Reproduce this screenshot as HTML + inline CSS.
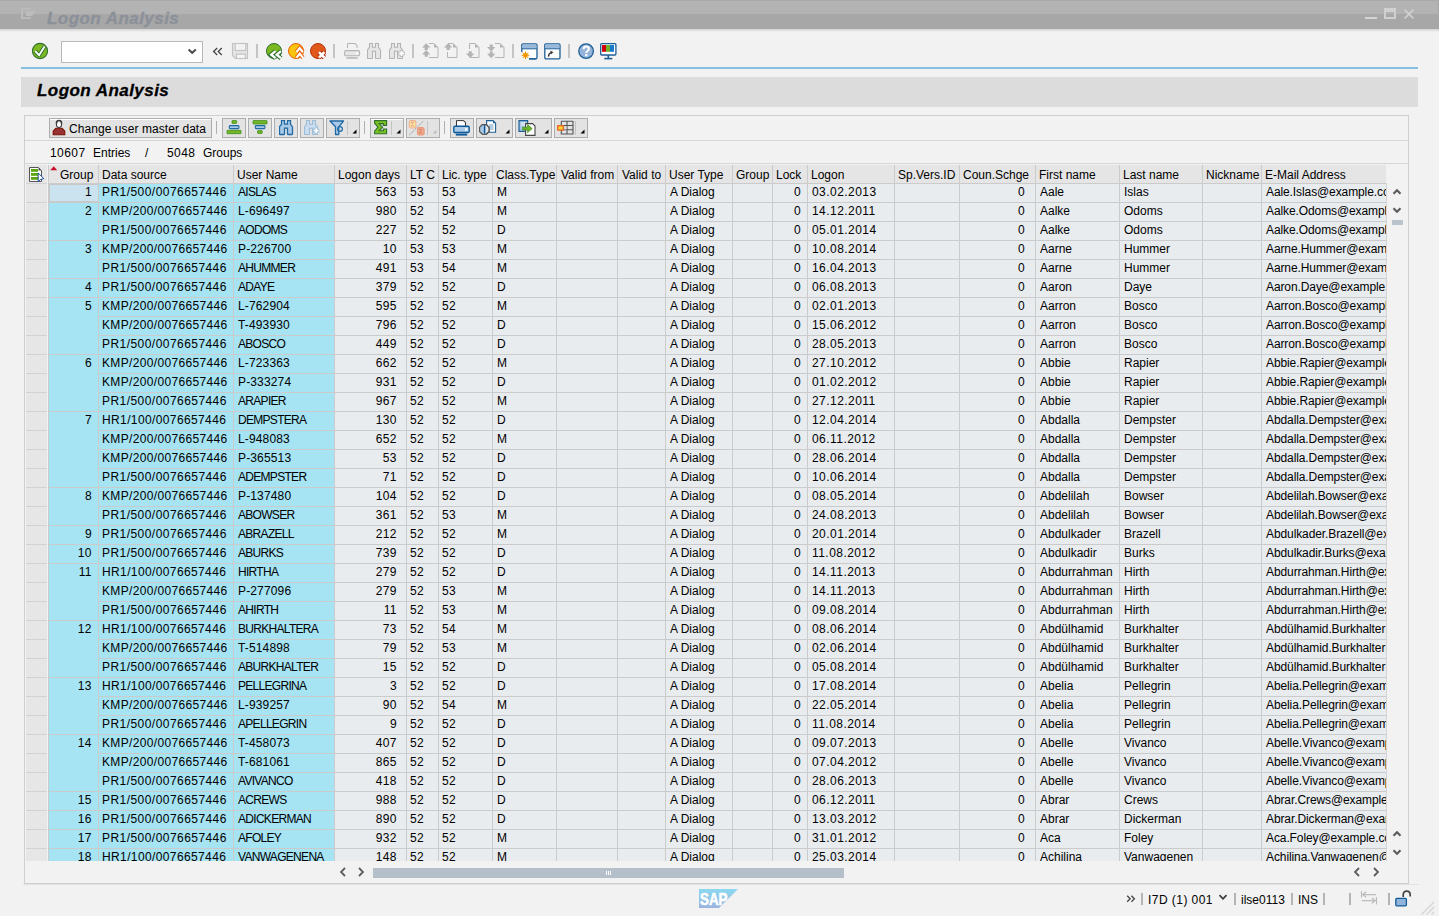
<!DOCTYPE html>
<html><head><meta charset="utf-8"><title>Logon Analysis</title>
<style>
*{margin:0;padding:0;box-sizing:border-box}
html,body{width:1439px;height:916px;overflow:hidden;background:#f2f2f2;font-family:"Liberation Sans",sans-serif;font-size:12px;color:#000}
.a{position:absolute}
.t{position:absolute;white-space:nowrap;line-height:14px;height:14px}
.n{letter-spacing:0.45px}
.btn{position:absolute;background:#e3e3e3;border:1px solid #adadad}
.sep{position:absolute;width:1px;background:#b9b9b9}
</style></head><body>

<div class="a" style="left:0;top:0;width:1439px;height:14px;background:#b3b3b3"></div>
<div class="a" style="left:0;top:14px;width:1439px;height:15px;background:#a7a7a7"></div><div class="a" style="left:0;top:0;width:1439px;height:1px;background:#a9a9a9"></div><div class="a" style="left:1438px;top:0;width:1px;height:14px;background:#a9a9a9"></div>
<div class="a" style="left:0;top:29px;width:1439px;height:3px;background:linear-gradient(#d2d2d2,#f2f2f2)"></div>
<svg class="a" style="left:21px;top:8px" width="16" height="12" viewBox="0 0 16 12"><path d="M0 0H10V1.8H2V9.2H10V11H0Z" fill="#bcbcbc"/><path d="M4.8 3H15L10.8 8H4.8Z" fill="#bcbcbc"/></svg>
<div class="t" style="left:47px;top:11px;font-size:17px;line-height:16px;height:16px;font-weight:bold;font-style:italic;color:#8b9099;letter-spacing:0.45px;-webkit-text-stroke:0.3px #8b9099">Logon Analysis</div>
<div class="a" style="left:1365px;top:17px;width:12px;height:2px;background:#d4d4d4"></div>
<div class="a" style="left:1384px;top:8px;width:12px;height:11px;border:2px solid #d0d0d0;border-top-width:4px"></div>
<svg class="a" style="left:1404px;top:9px" width="10" height="10" viewBox="0 0 10 10"><path d="M0.6 0.6L9.4 9.4M9.4 0.6L0.6 9.4" stroke="#d0d0d0" stroke-width="1.7"/></svg>
<svg class="a" style="left:31px;top:42px" width="18" height="18" viewBox="0 0 18 18"><circle cx="9" cy="9" r="7.6" fill="#7cb820" stroke="#2e7030" stroke-width="1.1"/><path d="M4.2 9.1L8.1 13.2L13.6 4.6" fill="none" stroke="#2e7030" stroke-width="3.8" stroke-linejoin="round"/><path d="M4.2 9.1L8.1 13.2L13.6 4.6" fill="none" stroke="#fff" stroke-width="1.9"/></svg>
<div class="a" style="left:61px;top:41px;width:142px;height:22px;background:#fff;border:1px solid #b8b8b8"></div>
<svg class="a" style="left:186px;top:47px" width="12" height="9" viewBox="0 0 12 9"><path d="M2.6 2.4L6.2 5.8L9.8 2.4" fill="none" stroke="#4a4a4a" stroke-width="2"/></svg>
<svg class="a" style="left:212px;top:47px" width="12" height="10" viewBox="0 0 12 10"><path d="M5.2 1L1.6 4.5L5.2 8M9.8 1L6.2 4.5L9.8 8" fill="none" stroke="#454545" stroke-width="1.3"/></svg>
<svg class="a" style="left:231px;top:42px" width="18" height="18" viewBox="0 0 18 18"><path d="M1.5 1.5H16.5V16.5H4.5L1.5 13.5Z" fill="#e4e4e4" stroke="#c2c2c2" stroke-width="1.1"/><rect x="4.2" y="1.5" width="10.5" height="7" fill="#f2f2f2" stroke="#c2c2c2" stroke-width="1.1"/><rect x="5.5" y="12.2" width="8.8" height="4.3" fill="#f6f6f6" stroke="#c2c2c2" stroke-width="1.1"/></svg>
<div class="a" style="left:256px;top:44px;width:2px;height:14px;background:#c4c4c4"></div>
<svg class="a" style="left:265px;top:42px" width="19" height="19" viewBox="0 0 19 19"><circle cx="9" cy="9" r="7.5" fill="#7cb820" stroke="#2e7030" stroke-width="1"/><path d="M10.5 9.2L6.2 12.7L10.5 16.2M16 9.2L11.7 12.7L16 16.2" fill="none" stroke="#2e7030" stroke-width="4.4"/><path d="M10.5 9.2L6.2 12.7L10.5 16.2M16 9.2L11.7 12.7L16 16.2" fill="none" stroke="#fff" stroke-width="2.3"/></svg>
<svg class="a" style="left:287px;top:42px" width="19" height="19" viewBox="0 0 19 19"><circle cx="9" cy="9" r="7.5" fill="#f9c30f" stroke="#e6600e" stroke-width="1"/><path d="M9.5 10L12.7 6.2L15.9 10M9.5 15.6L12.7 11.8L15.9 15.6" fill="none" stroke="#e6600e" stroke-width="4.2"/><path d="M9.5 10L12.7 6.2L15.9 10M9.5 15.6L12.7 11.8L15.9 15.6" fill="none" stroke="#fff" stroke-width="2.2"/></svg>
<svg class="a" style="left:309px;top:42px" width="19" height="19" viewBox="0 0 19 19"><circle cx="9" cy="9" r="7.5" fill="#e0581a" stroke="#b8300c" stroke-width="1"/><path d="M10 10.2L15.4 15.6M15.4 10.2L10 15.6" fill="none" stroke="#b8300c" stroke-width="4.6"/><path d="M10 10.2L15.4 15.6M15.4 10.2L10 15.6" fill="none" stroke="#fff" stroke-width="2.6"/></svg>
<div class="a" style="left:333px;top:44px;width:2px;height:14px;background:#c4c4c4"></div>
<svg class="a" style="left:344px;top:43px" width="17" height="17" viewBox="0 0 17 17"><path d="M3.5 5V0.5H11.5L13 2V5" fill="none" stroke="#b4b4b4" stroke-width="1"/><path d="M11.5 0.5V2H13Z" fill="#b4b4b4"/><rect x="0.6" y="7.6" width="15" height="5.2" rx="1.3" fill="#e6e6e6" stroke="#b4b4b4" stroke-width="1.1"/><rect x="12" y="9.2" width="2" height="2" fill="#fff"/><rect x="2.3" y="14.2" width="11.6" height="1.6" rx="0.8" fill="#b4b4b4"/></svg>
<svg class="a" style="left:367px;top:43px" width="15" height="17" viewBox="0 0 15 17"><path d="M2.5 0.5H5.5V4.2H8.5V0.5H11.5V4.5Q13.5 6 13.5 7.5V15Q13.5 15.5 13 15.5H9Q8.5 15.5 8.5 15V8.2H5.5V15Q5.5 15.5 5 15.5H1Q0.5 15.5 0.5 15V7.5Q0.5 6 2.5 4.5Z" fill="#e6e6e6" stroke="#b4b4b4" stroke-width="1.1"/></svg>
<svg class="a" style="left:389px;top:43px" width="17" height="17" viewBox="0 0 17 17"><path d="M2.5 0.5H5.5V4.2H8.5V0.5H11.5V4.5Q13.5 6 13.5 7.5V15Q13.5 15.5 13 15.5H9Q8.5 15.5 8.5 15V8.2H5.5V15Q5.5 15.5 5 15.5H1Q0.5 15.5 0.5 15V7.5Q0.5 6 2.5 4.5Z" fill="#e6e6e6" stroke="#b4b4b4" stroke-width="1.1"/><path d="M12.5 7.2V13.8M9.2 10.5H15.8" stroke="#b4b4b4" stroke-width="3.6"/><path d="M12.5 7.9V13.1M9.9 10.5H15.1" stroke="#fff" stroke-width="1.8"/></svg>
<div class="a" style="left:412px;top:44px;width:2px;height:14px;background:#c4c4c4"></div>
<svg class="a" style="left:422px;top:43px" width="18" height="17" viewBox="0 0 18 17"><path d="M6.5 0.5H12L16 4.5V14.5H6.5Z" fill="none" stroke="#b4b4b4" stroke-width="1"/><path d="M12 0.5L16 4.5H12Z" fill="#b4b4b4"/><rect x="5" y="0" width="2" height="15" fill="#f2f2f2"/><path d="M0 4.6L4.2 0.2L8.4 4.6H5.8V7H2.6V4.6Z" fill="#b4b4b4"/><path d="M0 11.399999999999999L4.2 7.0L8.4 11.399999999999999H5.8V13.8H2.6V11.399999999999999Z" fill="#b4b4b4"/></svg>
<svg class="a" style="left:444px;top:43px" width="18" height="17" viewBox="0 0 18 17"><path d="M3.5 0.5H9L13 4.5V14.5H3.5Z" fill="none" stroke="#b4b4b4" stroke-width="1"/><path d="M9 0.5L13 4.5H9Z" fill="#b4b4b4"/><rect x="2" y="0" width="2" height="9" fill="#f2f2f2"/><path d="M0 4.6L4.2 0.2L8.4 4.6H5.8V7H2.6V4.6Z" fill="#b4b4b4"/></svg>
<svg class="a" style="left:466px;top:43px" width="18" height="17" viewBox="0 0 18 17"><path d="M3.5 0.5H9L13 4.5V14.5H3.5Z" fill="none" stroke="#b4b4b4" stroke-width="1"/><path d="M9 0.5L13 4.5H9Z" fill="#b4b4b4"/><rect x="2" y="6" width="2" height="10" fill="#f2f2f2"/><path d="M0 10.6L4.2 15L8.4 10.6H5.8V8.2H2.6V10.6Z" fill="#b4b4b4"/></svg>
<svg class="a" style="left:487px;top:43px" width="18" height="17" viewBox="0 0 18 17"><path d="M7.5 0.5H13L17 4.5V14.5H7.5Z" fill="none" stroke="#b4b4b4" stroke-width="1"/><path d="M13 0.5L17 4.5H13Z" fill="#b4b4b4"/><rect x="6" y="0" width="2" height="16" fill="#f2f2f2"/><path d="M0 4.0L4.2 8.4L8.4 4.0H5.8V1.5999999999999999H2.6V4.0Z" fill="#b4b4b4"/><path d="M0 10.799999999999999L4.2 15.2L8.4 10.799999999999999H5.8V8.399999999999999H2.6V10.799999999999999Z" fill="#b4b4b4"/></svg>
<div class="a" style="left:512px;top:44px;width:2px;height:14px;background:#c4c4c4"></div>
<svg class="a" style="left:521px;top:43px" width="17" height="17" viewBox="0 0 17 17"><rect x="0.8" y="0.8" width="15.2" height="15" rx="1.2" fill="#fff" stroke="#1b5e96" stroke-width="1.3"/><rect x="1.5" y="1.5" width="13.8" height="4" fill="#98b8dc"/><path d="M1 5.8H15.8" stroke="#1b5e96" stroke-width="1"/><rect x="0" y="9" width="8" height="8" fill="#f2f2f2"/><circle cx="4.5" cy="12.3" r="2.4" fill="#f9b600"/><path d="M4.5 8.6V16M0.8 12.3H8.2M1.9 9.7L7.1 14.9M7.1 9.7L1.9 14.9" stroke="#f39200" stroke-width="1"/><path d="M8 15.8H15.2" stroke="#1b5e96" stroke-width="1.3"/></svg>
<svg class="a" style="left:544px;top:43px" width="17" height="17" viewBox="0 0 17 17"><rect x="0.8" y="0.8" width="15.2" height="15" rx="1.2" fill="#fff" stroke="#1b5e96" stroke-width="1.3"/><rect x="1.5" y="1.5" width="13.8" height="4" fill="#98b8dc"/><path d="M1 5.8H15.8" stroke="#1b5e96" stroke-width="1"/><path d="M4.6 13.6Q4.4 10.4 7.2 9.6" fill="none" stroke="#3a3a3a" stroke-width="1.5"/><path d="M6.4 7.6L9.4 9.2L6.8 11.4Z" fill="#3a3a3a"/></svg>
<div class="a" style="left:568px;top:44px;width:2px;height:14px;background:#c4c4c4"></div>
<svg class="a" style="left:578px;top:43px" width="17" height="17" viewBox="0 0 17 17"><circle cx="8.1" cy="8.1" r="7.3" fill="#93b3d8" stroke="#1b5e96" stroke-width="1.3"/><path d="M5.6 6.3Q5.6 3.6 8.2 3.6Q10.8 3.6 10.8 5.9Q10.8 7.2 9.4 8Q8.3 8.6 8.3 10" fill="none" stroke="#fff" stroke-width="2"/><rect x="7.2" y="11.1" width="2.2" height="2.2" fill="#fff"/></svg>
<svg class="a" style="left:600px;top:43px" width="17" height="17" viewBox="0 0 17 17"><rect x="0.7" y="0.7" width="15.2" height="11.3" rx="1" fill="#fff" stroke="#1b5e96" stroke-width="1.3"/><rect x="2" y="2" width="4" height="6.8" fill="#d0000e"/><rect x="6" y="2" width="4" height="6.8" fill="#72b02a"/><rect x="10" y="2" width="4" height="6.8" fill="#1a7acb"/><path d="M8.3 12V15" stroke="#1b5e96" stroke-width="1.6"/><path d="M4.3 15.6H12.3" stroke="#1b5e96" stroke-width="1.6"/></svg>
<div class="a" style="left:21px;top:67px;width:1397px;height:2px;background:#88bee0"></div>
<div class="a" style="left:21px;top:77px;width:1397px;height:30px;background:#dcdcdc"></div>
<div class="t" style="left:37px;top:82px;font-size:17px;line-height:18px;height:18px;font-weight:bold;font-style:italic;color:#000;letter-spacing:0.45px;-webkit-text-stroke:0.3px #000">Logon Analysis</div>
<div class="a" style="left:24px;top:115px;width:1385px;height:769px;border:1px solid #cfcfcf"></div>
<div class="a" style="left:25px;top:140px;width:1383px;height:1px;background:#d6d6d6"></div>
<div class="a" style="left:25px;top:163px;width:1383px;height:1px;background:#d6d6d6"></div>
<div class="a" style="left:23px;top:884px;width:1396px;height:1px;background:#e2e2e2"></div>
<div class="btn" style="left:49px;top:118px;width:163px;height:20px;box-shadow:inset 0 1px #fff"></div>
<svg class="a" style="left:52px;top:119px" width="14" height="17" viewBox="0 0 14 17"><path d="M1.2 15.8V12.2L3.8 9.3H10.2L12.8 12.2V15.8Z" fill="#993333" stroke="#7a1000" stroke-width="1.1" stroke-linejoin="round"/><ellipse cx="7" cy="5" rx="2.6" ry="3.5" fill="#fff" stroke="#3c3c3c" stroke-width="1.1"/><path d="M4.4 4.6Q4.4 1.5 7 1.5Q9.6 1.5 9.6 4.6" fill="none" stroke="#3c3c3c" stroke-width="1.6"/></svg>
<div class="t" style="left:69px;top:122px;letter-spacing:0.07px">Change user master data</div>
<div class="a" style="left:216px;top:121px;width:1px;height:13px;background:#b0b0b0"></div>
<div class="btn" style="left:222px;top:118px;width:24px;height:20px"></div>
<div class="btn" style="left:248px;top:118px;width:24px;height:20px"></div>
<div class="btn" style="left:274px;top:118px;width:24px;height:20px"></div>
<div class="btn" style="left:300px;top:118px;width:24px;height:20px"></div>
<div class="btn" style="left:326px;top:118px;width:34px;height:20px"></div>
<div class="a" style="left:347px;top:121px;width:1px;height:14px;background:#c4c4c4"></div>
<svg class="a" style="left:352px;top:129px" width="5" height="5" viewBox="0 0 5 5"><path d="M4.5 0.5V4.5H0.5Z" fill="#000"/></svg>
<div class="a" style="left:364px;top:121px;width:1px;height:13px;background:#b0b0b0"></div>
<div class="btn" style="left:370px;top:118px;width:34px;height:20px"></div>
<div class="a" style="left:391px;top:121px;width:1px;height:14px;background:#c4c4c4"></div>
<svg class="a" style="left:396px;top:129px" width="5" height="5" viewBox="0 0 5 5"><path d="M4.5 0.5V4.5H0.5Z" fill="#000"/></svg>
<div class="btn" style="left:406px;top:118px;width:34px;height:20px"></div>
<div class="a" style="left:427px;top:121px;width:1px;height:14px;background:#c4c4c4"></div>
<svg class="a" style="left:432px;top:129px" width="5" height="5" viewBox="0 0 5 5"><path d="M4.5 0.5V4.5H0.5Z" fill="#c0c0c0"/></svg>
<div class="a" style="left:444px;top:121px;width:1px;height:13px;background:#b0b0b0"></div>
<div class="btn" style="left:450px;top:118px;width:24px;height:20px"></div>
<div class="btn" style="left:476px;top:118px;width:37px;height:20px"></div>
<svg class="a" style="left:505px;top:129px" width="5" height="5" viewBox="0 0 5 5"><path d="M4.5 0.5V4.5H0.5Z" fill="#000"/></svg>
<div class="btn" style="left:515px;top:118px;width:37px;height:20px"></div>
<svg class="a" style="left:544px;top:129px" width="5" height="5" viewBox="0 0 5 5"><path d="M4.5 0.5V4.5H0.5Z" fill="#000"/></svg>
<div class="btn" style="left:554px;top:118px;width:34px;height:20px"></div>
<div class="a" style="left:575px;top:121px;width:1px;height:14px;background:#c4c4c4"></div>
<svg class="a" style="left:580px;top:129px" width="5" height="5" viewBox="0 0 5 5"><path d="M4.5 0.5V4.5H0.5Z" fill="#000"/></svg>
<svg class="a" style="left:226px;top:120px" width="16" height="15" viewBox="0 0 16 15"><rect x="6" y="0.6" width="4.6" height="2.8" rx="0.5" fill="#76b729" stroke="#3d8b1a" stroke-width="0.8"/><rect x="3.3" y="5.6" width="9.6" height="3" rx="0.8" fill="#a9c9e6" stroke="#1f6aa5" stroke-width="1.1"/><rect x="1" y="10.3" width="14" height="3.4" rx="0.5" fill="#76b729" stroke="#3d8b1a" stroke-width="0.8"/></svg>
<svg class="a" style="left:252px;top:120px" width="16" height="15" viewBox="0 0 16 15"><rect x="1" y="0.6" width="14" height="3.4" rx="0.5" fill="#76b729" stroke="#3d8b1a" stroke-width="0.8"/><rect x="3.3" y="5.6" width="9.6" height="3" rx="0.8" fill="#a9c9e6" stroke="#1f6aa5" stroke-width="1.1"/><rect x="5.6" y="10.6" width="4.6" height="2.8" rx="0.5" fill="#76b729" stroke="#3d8b1a" stroke-width="0.8"/></svg>
<svg class="a" style="left:279px;top:120px" width="15" height="16" viewBox="0 0 15 16"><path d="M2.5 0.5H5.5V4.2H8.5V0.5H11.5V4.5Q13.5 6 13.5 7.5V14Q13.5 14.5 13 14.5H9Q8.5 14.5 8.5 14V8.2H5.5V14Q5.5 14.5 5 14.5H1Q0.5 14.5 0.5 14V7.5Q0.5 6 2.5 4.5Z" fill="#a9c9e6" stroke="#1f6aa5" stroke-width="1.3"/></svg>
<svg class="a" style="left:304px;top:120px" width="17" height="17" viewBox="0 0 17 17"><path d="M2.5 0.5H5.5V4.2H8.5V0.5H11.5V4.5Q13.5 6 13.5 7.5V14Q13.5 14.5 13 14.5H9Q8.5 14.5 8.5 14V8.2H5.5V14Q5.5 14.5 5 14.5H1Q0.5 14.5 0.5 14V7.5Q0.5 6 2.5 4.5Z" fill="#c9ddef" stroke="#9cbcd8" stroke-width="1.1"/><path d="M12.3 7.6V13.6M9.3 10.6H15.3" stroke="#9cbcd8" stroke-width="3.6"/><path d="M12.3 8.3V12.9M10 10.6H14.6" stroke="#fff" stroke-width="1.8"/></svg>
<svg class="a" style="left:329px;top:120px" width="16" height="16" viewBox="0 0 16 16"><path d="M1 1H14.5L9.8 6.8V14.5H6.5V6.8Z" fill="#a9c9e6" stroke="#1f6aa5" stroke-width="1.3" stroke-linejoin="round"/><circle cx="11" cy="9" r="2.4" fill="none" stroke="#1f6aa5" stroke-width="1.2"/></svg>
<div class="a" style="left:371px;top:119px;width:32px;height:1px;background:#fff"></div>
<svg class="a" style="left:374px;top:120px" width="14" height="15" viewBox="0 0 14 15"><path d="M0.6 0.6H12.6V5.4H9.4V3.6H5.2L8.6 7.2L5.2 10.8H9.4V9H12.6V13.8H0.6V11.2L4 7.2L0.6 3.2Z" fill="#7cc01f" stroke="#2e7030" stroke-width="1.1" stroke-linejoin="miter"/></svg>
<svg class="a" style="left:408px;top:120px" width="18" height="17" viewBox="0 0 18 17"><rect x="1.3" y="0.6" width="6.6" height="7.4" rx="1.6" fill="#f9e7a0" stroke="#f0b090" stroke-width="1.1"/><path d="M2.8 2.4H6.4M3 2.6L5 4.3L3 6M2.8 6H6.4" fill="none" stroke="#e8a08a" stroke-width="0.9"/><rect x="9.5" y="7.6" width="6.6" height="7.4" rx="1.6" fill="#f0b090" stroke="#e89878" stroke-width="1.1"/><path d="M11 9.4H14.6M11.2 9.6L13.2 11.3L11.2 13M11 13H14.6" fill="none" stroke="#d87a68" stroke-width="0.9"/><path d="M1.2 15.2L15.8 0.6" stroke="#6a6a6a" stroke-width="0.7" stroke-dasharray="1 0.6"/></svg>
<svg class="a" style="left:453px;top:120px" width="18" height="17" viewBox="0 0 18 17"><path d="M3.5 6V0.6H10.8L12.5 2.3V6" fill="#fff" stroke="#333" stroke-width="1"/><path d="M10.8 0.6V2.3H12.5Z" fill="#333"/><rect x="0.8" y="6.3" width="15.4" height="6.2" rx="1.2" fill="#a9c9e6" stroke="#0f5a9a" stroke-width="1.4"/><rect x="12" y="8.3" width="2.4" height="2.2" fill="#fff"/><rect x="2.8" y="13.6" width="11.4" height="2" fill="#0f5a9a"/></svg>
<svg class="a" style="left:479px;top:120px" width="19" height="16" viewBox="0 0 19 16"><path d="M7.6 0.6H14L16.6 3.2V12.2H7.6Z" fill="#fff" stroke="#1b5e96" stroke-width="1.1"/><path d="M14 0.6V3.2H16.6Z" fill="#1b5e96"/><path d="M10 5H14.5M10 7H14.5M10 9H14.5" stroke="#5a8ec0" stroke-width="0.9"/><path d="M3.4 4.6H7.4L10.2 7.4V11.4L7.4 14.2H3.4L0.6 11.4V7.4Z" fill="#dfe6ee" stroke="#555" stroke-width="1.1"/><path d="M3.4 4.6H5.4V14.2H3.4L0.6 11.4V7.4Z" fill="#a9c9e6"/><path d="M5.6 5.2V13.6" stroke="#0f5a9a" stroke-width="1.5"/><path d="M3.4 4.6H7.4L10.2 7.4V11.4L7.4 14.2H3.4L0.6 11.4V7.4Z" fill="none" stroke="#555" stroke-width="1.1"/></svg>
<svg class="a" style="left:518px;top:120px" width="19" height="17" viewBox="0 0 19 17"><path d="M1 0.6H9.6V11.4H1Z" fill="#a9c9e6" stroke="#1b5e96" stroke-width="1.2"/><path d="M3 3H7.6M3 5H7.6" stroke="#fff" stroke-width="0.9"/><path d="M7.6 3.6H14.6L17 6V15.4H7.6Z" fill="#fff" stroke="#444" stroke-width="1.1"/><path d="M4.6 7.2H9.6V4.6L14.2 8.6L9.6 12.6V10H4.6Z" fill="#6cb52b" stroke="#3d8a22" stroke-width="0.7"/></svg>
<svg class="a" style="left:557px;top:120px" width="18" height="16" viewBox="0 0 18 16"><path d="M4.3 1.2H16M4.3 5.5H16M4.3 9.8H16M4.3 14H16M4.3 1V14.5M10 1V14.5M16 1V14.5" stroke="#555" stroke-width="1.1"/><rect x="5" y="6" width="4.5" height="3.3" fill="#d8d8d8"/><rect x="0.7" y="5.7" width="5.6" height="4.4" fill="#f9d038" stroke="#e8601a" stroke-width="1.2"/></svg>
<div class="t n" style="left:50px;top:146px">10607</div>
<div class="t" style="left:93px;top:146px">Entries</div>
<div class="t" style="left:145px;top:146px">/</div>
<div class="t n" style="left:167px;top:146px">5048</div>
<div class="t" style="left:203px;top:146px">Groups</div>
<div class="a" style="left:26px;top:165px;width:21px;height:696px;background:#e6e6e6"></div>
<div class="a" style="left:49px;top:165px;width:1337px;height:18px;background:#e5e5e5"></div>
<div class="a" style="left:49px;top:184px;width:285px;height:677px;background:#a6e3f3"></div>
<div class="a" style="left:335px;top:184px;width:1051px;height:677px;background:#e9ecef"></div>
<div class="a" style="left:49px;top:183px;width:1337px;height:1px;background:#cbcbcb"></div>
<div class="a" style="left:26px;top:183px;width:21px;height:1px;background:#d2d2d2"></div>
<div class="a" style="left:49px;top:202px;width:1337px;height:1px;background:#cbcbcb"></div>
<div class="a" style="left:26px;top:202px;width:21px;height:1px;background:#d2d2d2"></div>
<div class="a" style="left:99px;top:221px;width:1287px;height:1px;background:#cbcbcb"></div>
<div class="a" style="left:26px;top:221px;width:21px;height:1px;background:#d2d2d2"></div>
<div class="a" style="left:49px;top:240px;width:1337px;height:1px;background:#cbcbcb"></div>
<div class="a" style="left:26px;top:240px;width:21px;height:1px;background:#d2d2d2"></div>
<div class="a" style="left:99px;top:259px;width:1287px;height:1px;background:#cbcbcb"></div>
<div class="a" style="left:26px;top:259px;width:21px;height:1px;background:#d2d2d2"></div>
<div class="a" style="left:49px;top:278px;width:1337px;height:1px;background:#cbcbcb"></div>
<div class="a" style="left:26px;top:278px;width:21px;height:1px;background:#d2d2d2"></div>
<div class="a" style="left:49px;top:297px;width:1337px;height:1px;background:#cbcbcb"></div>
<div class="a" style="left:26px;top:297px;width:21px;height:1px;background:#d2d2d2"></div>
<div class="a" style="left:99px;top:316px;width:1287px;height:1px;background:#cbcbcb"></div>
<div class="a" style="left:26px;top:316px;width:21px;height:1px;background:#d2d2d2"></div>
<div class="a" style="left:99px;top:335px;width:1287px;height:1px;background:#cbcbcb"></div>
<div class="a" style="left:26px;top:335px;width:21px;height:1px;background:#d2d2d2"></div>
<div class="a" style="left:49px;top:354px;width:1337px;height:1px;background:#cbcbcb"></div>
<div class="a" style="left:26px;top:354px;width:21px;height:1px;background:#d2d2d2"></div>
<div class="a" style="left:99px;top:373px;width:1287px;height:1px;background:#cbcbcb"></div>
<div class="a" style="left:26px;top:373px;width:21px;height:1px;background:#d2d2d2"></div>
<div class="a" style="left:99px;top:392px;width:1287px;height:1px;background:#cbcbcb"></div>
<div class="a" style="left:26px;top:392px;width:21px;height:1px;background:#d2d2d2"></div>
<div class="a" style="left:49px;top:411px;width:1337px;height:1px;background:#cbcbcb"></div>
<div class="a" style="left:26px;top:411px;width:21px;height:1px;background:#d2d2d2"></div>
<div class="a" style="left:99px;top:430px;width:1287px;height:1px;background:#cbcbcb"></div>
<div class="a" style="left:26px;top:430px;width:21px;height:1px;background:#d2d2d2"></div>
<div class="a" style="left:99px;top:449px;width:1287px;height:1px;background:#cbcbcb"></div>
<div class="a" style="left:26px;top:449px;width:21px;height:1px;background:#d2d2d2"></div>
<div class="a" style="left:99px;top:468px;width:1287px;height:1px;background:#cbcbcb"></div>
<div class="a" style="left:26px;top:468px;width:21px;height:1px;background:#d2d2d2"></div>
<div class="a" style="left:49px;top:487px;width:1337px;height:1px;background:#cbcbcb"></div>
<div class="a" style="left:26px;top:487px;width:21px;height:1px;background:#d2d2d2"></div>
<div class="a" style="left:99px;top:506px;width:1287px;height:1px;background:#cbcbcb"></div>
<div class="a" style="left:26px;top:506px;width:21px;height:1px;background:#d2d2d2"></div>
<div class="a" style="left:49px;top:525px;width:1337px;height:1px;background:#cbcbcb"></div>
<div class="a" style="left:26px;top:525px;width:21px;height:1px;background:#d2d2d2"></div>
<div class="a" style="left:49px;top:544px;width:1337px;height:1px;background:#cbcbcb"></div>
<div class="a" style="left:26px;top:544px;width:21px;height:1px;background:#d2d2d2"></div>
<div class="a" style="left:49px;top:563px;width:1337px;height:1px;background:#cbcbcb"></div>
<div class="a" style="left:26px;top:563px;width:21px;height:1px;background:#d2d2d2"></div>
<div class="a" style="left:99px;top:582px;width:1287px;height:1px;background:#cbcbcb"></div>
<div class="a" style="left:26px;top:582px;width:21px;height:1px;background:#d2d2d2"></div>
<div class="a" style="left:99px;top:601px;width:1287px;height:1px;background:#cbcbcb"></div>
<div class="a" style="left:26px;top:601px;width:21px;height:1px;background:#d2d2d2"></div>
<div class="a" style="left:49px;top:620px;width:1337px;height:1px;background:#cbcbcb"></div>
<div class="a" style="left:26px;top:620px;width:21px;height:1px;background:#d2d2d2"></div>
<div class="a" style="left:99px;top:639px;width:1287px;height:1px;background:#cbcbcb"></div>
<div class="a" style="left:26px;top:639px;width:21px;height:1px;background:#d2d2d2"></div>
<div class="a" style="left:99px;top:658px;width:1287px;height:1px;background:#cbcbcb"></div>
<div class="a" style="left:26px;top:658px;width:21px;height:1px;background:#d2d2d2"></div>
<div class="a" style="left:49px;top:677px;width:1337px;height:1px;background:#cbcbcb"></div>
<div class="a" style="left:26px;top:677px;width:21px;height:1px;background:#d2d2d2"></div>
<div class="a" style="left:99px;top:696px;width:1287px;height:1px;background:#cbcbcb"></div>
<div class="a" style="left:26px;top:696px;width:21px;height:1px;background:#d2d2d2"></div>
<div class="a" style="left:99px;top:715px;width:1287px;height:1px;background:#cbcbcb"></div>
<div class="a" style="left:26px;top:715px;width:21px;height:1px;background:#d2d2d2"></div>
<div class="a" style="left:49px;top:734px;width:1337px;height:1px;background:#cbcbcb"></div>
<div class="a" style="left:26px;top:734px;width:21px;height:1px;background:#d2d2d2"></div>
<div class="a" style="left:99px;top:753px;width:1287px;height:1px;background:#cbcbcb"></div>
<div class="a" style="left:26px;top:753px;width:21px;height:1px;background:#d2d2d2"></div>
<div class="a" style="left:99px;top:772px;width:1287px;height:1px;background:#cbcbcb"></div>
<div class="a" style="left:26px;top:772px;width:21px;height:1px;background:#d2d2d2"></div>
<div class="a" style="left:49px;top:791px;width:1337px;height:1px;background:#cbcbcb"></div>
<div class="a" style="left:26px;top:791px;width:21px;height:1px;background:#d2d2d2"></div>
<div class="a" style="left:49px;top:810px;width:1337px;height:1px;background:#cbcbcb"></div>
<div class="a" style="left:26px;top:810px;width:21px;height:1px;background:#d2d2d2"></div>
<div class="a" style="left:49px;top:829px;width:1337px;height:1px;background:#cbcbcb"></div>
<div class="a" style="left:26px;top:829px;width:21px;height:1px;background:#d2d2d2"></div>
<div class="a" style="left:49px;top:848px;width:1337px;height:1px;background:#cbcbcb"></div>
<div class="a" style="left:26px;top:848px;width:21px;height:1px;background:#d2d2d2"></div>
<div class="a" style="left:48px;top:165px;width:1px;height:696px;background:#cbcbcb"></div>
<div class="a" style="left:98px;top:165px;width:1px;height:696px;background:#cbcbcb"></div>
<div class="a" style="left:233px;top:165px;width:1px;height:696px;background:#cbcbcb"></div>
<div class="a" style="left:334px;top:165px;width:1px;height:696px;background:#cbcbcb"></div>
<div class="a" style="left:406px;top:165px;width:1px;height:696px;background:#cbcbcb"></div>
<div class="a" style="left:438px;top:165px;width:1px;height:696px;background:#cbcbcb"></div>
<div class="a" style="left:492px;top:165px;width:1px;height:696px;background:#cbcbcb"></div>
<div class="a" style="left:556px;top:165px;width:1px;height:696px;background:#cbcbcb"></div>
<div class="a" style="left:617px;top:165px;width:1px;height:696px;background:#cbcbcb"></div>
<div class="a" style="left:665px;top:165px;width:1px;height:696px;background:#cbcbcb"></div>
<div class="a" style="left:732px;top:165px;width:1px;height:696px;background:#cbcbcb"></div>
<div class="a" style="left:772px;top:165px;width:1px;height:696px;background:#cbcbcb"></div>
<div class="a" style="left:807px;top:165px;width:1px;height:696px;background:#cbcbcb"></div>
<div class="a" style="left:894px;top:165px;width:1px;height:696px;background:#cbcbcb"></div>
<div class="a" style="left:959px;top:165px;width:1px;height:696px;background:#cbcbcb"></div>
<div class="a" style="left:1035px;top:165px;width:1px;height:696px;background:#cbcbcb"></div>
<div class="a" style="left:1119px;top:165px;width:1px;height:696px;background:#cbcbcb"></div>
<div class="a" style="left:1202px;top:165px;width:1px;height:696px;background:#cbcbcb"></div>
<div class="a" style="left:1261px;top:165px;width:1px;height:696px;background:#cbcbcb"></div>
<div class="a" style="left:1386px;top:183px;width:1px;height:678px;background:#d4d4d4"></div>
<div class="a" style="left:49px;top:184px;width:49px;height:18px;background:#cbe3ee;border:1px solid #c8c8c8;border-right:0"></div>
<svg class="a" style="left:29px;top:167px" width="17" height="16" viewBox="0 0 17 16"><path d="M0.5 0.5H9.5L12.5 3.5V14.5H0.5Z" fill="#fff" stroke="#555" stroke-width="1"/><path d="M9.5 0.5L12.5 3.5H9.5Z" fill="#555"/><rect x="2" y="2" width="7" height="2.8" fill="#5aa60d"/><rect x="2" y="6" width="7" height="2.8" fill="#5aa60d"/><rect x="2" y="10" width="7" height="2.8" fill="#5aa60d"/><path d="M9.2 6V14.8L11.2 12.6L14.8 11.6Z" fill="#fff" stroke="#1b4fa0" stroke-width="1"/></svg>
<svg class="a" style="left:50px;top:166px" width="8" height="5" viewBox="0 0 8 5"><path d="M0.2 4.2L3.7 0.2L7.2 4.2Z" fill="#c8102e"/></svg>
<div class="t" style="left:60px;top:168px">Group</div>
<div class="t" style="left:102px;top:168px">Data source</div>
<div class="t" style="left:237px;top:168px">User Name</div>
<div class="t" style="left:338px;top:168px">Logon days</div>
<div class="t" style="left:410px;top:168px">LT C</div>
<div class="t" style="left:442px;top:168px">Lic. type</div>
<div class="t" style="left:496px;top:168px">Class.Type</div>
<div class="t" style="left:561px;top:168px">Valid from</div>
<div class="t" style="left:622px;top:168px">Valid to</div>
<div class="t" style="left:669px;top:168px">User Type</div>
<div class="t" style="left:736px;top:168px">Group</div>
<div class="t" style="left:776px;top:168px">Lock</div>
<div class="t" style="left:811px;top:168px">Logon</div>
<div class="t" style="left:898px;top:168px">Sp.Vers.ID</div>
<div class="t" style="left:963px;top:168px">Coun.Schge</div>
<div class="t" style="left:1039px;top:168px">First name</div>
<div class="t" style="left:1123px;top:168px">Last name</div>
<div class="t" style="left:1206px;top:168px">Nickname</div>
<div class="t" style="left:1265px;top:168px">E-Mail Address</div>
<div class="t n" style="right:1347px;top:185px">1</div>
<div class="t" style="left:102px;top:185px;letter-spacing:0.45px">PR1/500/0076657446</div>
<div class="t" style="left:238px;top:185px;letter-spacing:-0.7px">AISLAS</div>
<div class="t n" style="right:1042px;top:185px">563</div>
<div class="t n" style="left:410px;top:185px">53</div>
<div class="t n" style="left:442px;top:185px">53</div>
<div class="t" style="left:497px;top:185px">M</div>
<div class="t" style="left:670px;top:185px">A Dialog</div>
<div class="t n" style="right:638px;top:185px">0</div>
<div class="t n" style="left:812px;top:185px">03.02.2013</div>
<div class="t n" style="right:414px;top:185px">0</div>
<div class="t" style="left:1040px;top:185px">Aale</div>
<div class="t" style="left:1124px;top:185px">Islas</div>
<div class="t" style="left:1262px;top:185px;width:124px;overflow:hidden;padding-left:4px;letter-spacing:-0.1px">Aale.Islas@example.com</div>
<div class="t n" style="right:1347px;top:204px">2</div>
<div class="t" style="left:102px;top:204px;letter-spacing:0.34px">KMP/200/0076657446</div>
<div class="t" style="left:238px;top:204px;letter-spacing:0.15px">L-696497</div>
<div class="t n" style="right:1042px;top:204px">980</div>
<div class="t n" style="left:410px;top:204px">52</div>
<div class="t n" style="left:442px;top:204px">54</div>
<div class="t" style="left:497px;top:204px">M</div>
<div class="t" style="left:670px;top:204px">A Dialog</div>
<div class="t n" style="right:638px;top:204px">0</div>
<div class="t n" style="left:812px;top:204px">14.12.2011</div>
<div class="t n" style="right:414px;top:204px">0</div>
<div class="t" style="left:1040px;top:204px">Aalke</div>
<div class="t" style="left:1124px;top:204px">Odoms</div>
<div class="t" style="left:1262px;top:204px;width:124px;overflow:hidden;padding-left:4px;letter-spacing:-0.1px">Aalke.Odoms@example.com</div>
<div class="t" style="left:102px;top:223px;letter-spacing:0.45px">PR1/500/0076657446</div>
<div class="t" style="left:238px;top:223px;letter-spacing:-0.7px">AODOMS</div>
<div class="t n" style="right:1042px;top:223px">227</div>
<div class="t n" style="left:410px;top:223px">52</div>
<div class="t n" style="left:442px;top:223px">52</div>
<div class="t" style="left:497px;top:223px">D</div>
<div class="t" style="left:670px;top:223px">A Dialog</div>
<div class="t n" style="right:638px;top:223px">0</div>
<div class="t n" style="left:812px;top:223px">05.01.2014</div>
<div class="t n" style="right:414px;top:223px">0</div>
<div class="t" style="left:1040px;top:223px">Aalke</div>
<div class="t" style="left:1124px;top:223px">Odoms</div>
<div class="t" style="left:1262px;top:223px;width:124px;overflow:hidden;padding-left:4px;letter-spacing:-0.1px">Aalke.Odoms@example.com</div>
<div class="t n" style="right:1347px;top:242px">3</div>
<div class="t" style="left:102px;top:242px;letter-spacing:0.34px">KMP/200/0076657446</div>
<div class="t" style="left:238px;top:242px;letter-spacing:0.15px">P-226700</div>
<div class="t n" style="right:1042px;top:242px">10</div>
<div class="t n" style="left:410px;top:242px">53</div>
<div class="t n" style="left:442px;top:242px">53</div>
<div class="t" style="left:497px;top:242px">M</div>
<div class="t" style="left:670px;top:242px">A Dialog</div>
<div class="t n" style="right:638px;top:242px">0</div>
<div class="t n" style="left:812px;top:242px">10.08.2014</div>
<div class="t n" style="right:414px;top:242px">0</div>
<div class="t" style="left:1040px;top:242px">Aarne</div>
<div class="t" style="left:1124px;top:242px">Hummer</div>
<div class="t" style="left:1262px;top:242px;width:124px;overflow:hidden;padding-left:4px;letter-spacing:-0.1px">Aarne.Hummer@example.com</div>
<div class="t" style="left:102px;top:261px;letter-spacing:0.45px">PR1/500/0076657446</div>
<div class="t" style="left:238px;top:261px;letter-spacing:-0.7px">AHUMMER</div>
<div class="t n" style="right:1042px;top:261px">491</div>
<div class="t n" style="left:410px;top:261px">53</div>
<div class="t n" style="left:442px;top:261px">54</div>
<div class="t" style="left:497px;top:261px">M</div>
<div class="t" style="left:670px;top:261px">A Dialog</div>
<div class="t n" style="right:638px;top:261px">0</div>
<div class="t n" style="left:812px;top:261px">16.04.2013</div>
<div class="t n" style="right:414px;top:261px">0</div>
<div class="t" style="left:1040px;top:261px">Aarne</div>
<div class="t" style="left:1124px;top:261px">Hummer</div>
<div class="t" style="left:1262px;top:261px;width:124px;overflow:hidden;padding-left:4px;letter-spacing:-0.1px">Aarne.Hummer@example.com</div>
<div class="t n" style="right:1347px;top:280px">4</div>
<div class="t" style="left:102px;top:280px;letter-spacing:0.45px">PR1/500/0076657446</div>
<div class="t" style="left:238px;top:280px;letter-spacing:-0.7px">ADAYE</div>
<div class="t n" style="right:1042px;top:280px">379</div>
<div class="t n" style="left:410px;top:280px">52</div>
<div class="t n" style="left:442px;top:280px">52</div>
<div class="t" style="left:497px;top:280px">D</div>
<div class="t" style="left:670px;top:280px">A Dialog</div>
<div class="t n" style="right:638px;top:280px">0</div>
<div class="t n" style="left:812px;top:280px">06.08.2013</div>
<div class="t n" style="right:414px;top:280px">0</div>
<div class="t" style="left:1040px;top:280px">Aaron</div>
<div class="t" style="left:1124px;top:280px">Daye</div>
<div class="t" style="left:1262px;top:280px;width:124px;overflow:hidden;padding-left:4px;letter-spacing:-0.1px">Aaron.Daye@example.com</div>
<div class="t n" style="right:1347px;top:299px">5</div>
<div class="t" style="left:102px;top:299px;letter-spacing:0.34px">KMP/200/0076657446</div>
<div class="t" style="left:238px;top:299px;letter-spacing:0.15px">L-762904</div>
<div class="t n" style="right:1042px;top:299px">595</div>
<div class="t n" style="left:410px;top:299px">52</div>
<div class="t n" style="left:442px;top:299px">52</div>
<div class="t" style="left:497px;top:299px">M</div>
<div class="t" style="left:670px;top:299px">A Dialog</div>
<div class="t n" style="right:638px;top:299px">0</div>
<div class="t n" style="left:812px;top:299px">02.01.2013</div>
<div class="t n" style="right:414px;top:299px">0</div>
<div class="t" style="left:1040px;top:299px">Aarron</div>
<div class="t" style="left:1124px;top:299px">Bosco</div>
<div class="t" style="left:1262px;top:299px;width:124px;overflow:hidden;padding-left:4px;letter-spacing:-0.1px">Aarron.Bosco@example.com</div>
<div class="t" style="left:102px;top:318px;letter-spacing:0.34px">KMP/200/0076657446</div>
<div class="t" style="left:238px;top:318px;letter-spacing:0.15px">T-493930</div>
<div class="t n" style="right:1042px;top:318px">796</div>
<div class="t n" style="left:410px;top:318px">52</div>
<div class="t n" style="left:442px;top:318px">52</div>
<div class="t" style="left:497px;top:318px">D</div>
<div class="t" style="left:670px;top:318px">A Dialog</div>
<div class="t n" style="right:638px;top:318px">0</div>
<div class="t n" style="left:812px;top:318px">15.06.2012</div>
<div class="t n" style="right:414px;top:318px">0</div>
<div class="t" style="left:1040px;top:318px">Aarron</div>
<div class="t" style="left:1124px;top:318px">Bosco</div>
<div class="t" style="left:1262px;top:318px;width:124px;overflow:hidden;padding-left:4px;letter-spacing:-0.1px">Aarron.Bosco@example.com</div>
<div class="t" style="left:102px;top:337px;letter-spacing:0.45px">PR1/500/0076657446</div>
<div class="t" style="left:238px;top:337px;letter-spacing:-0.7px">ABOSCO</div>
<div class="t n" style="right:1042px;top:337px">449</div>
<div class="t n" style="left:410px;top:337px">52</div>
<div class="t n" style="left:442px;top:337px">52</div>
<div class="t" style="left:497px;top:337px">D</div>
<div class="t" style="left:670px;top:337px">A Dialog</div>
<div class="t n" style="right:638px;top:337px">0</div>
<div class="t n" style="left:812px;top:337px">28.05.2013</div>
<div class="t n" style="right:414px;top:337px">0</div>
<div class="t" style="left:1040px;top:337px">Aarron</div>
<div class="t" style="left:1124px;top:337px">Bosco</div>
<div class="t" style="left:1262px;top:337px;width:124px;overflow:hidden;padding-left:4px;letter-spacing:-0.1px">Aarron.Bosco@example.com</div>
<div class="t n" style="right:1347px;top:356px">6</div>
<div class="t" style="left:102px;top:356px;letter-spacing:0.34px">KMP/200/0076657446</div>
<div class="t" style="left:238px;top:356px;letter-spacing:0.15px">L-723363</div>
<div class="t n" style="right:1042px;top:356px">662</div>
<div class="t n" style="left:410px;top:356px">52</div>
<div class="t n" style="left:442px;top:356px">52</div>
<div class="t" style="left:497px;top:356px">M</div>
<div class="t" style="left:670px;top:356px">A Dialog</div>
<div class="t n" style="right:638px;top:356px">0</div>
<div class="t n" style="left:812px;top:356px">27.10.2012</div>
<div class="t n" style="right:414px;top:356px">0</div>
<div class="t" style="left:1040px;top:356px">Abbie</div>
<div class="t" style="left:1124px;top:356px">Rapier</div>
<div class="t" style="left:1262px;top:356px;width:124px;overflow:hidden;padding-left:4px;letter-spacing:-0.1px">Abbie.Rapier@example.com</div>
<div class="t" style="left:102px;top:375px;letter-spacing:0.34px">KMP/200/0076657446</div>
<div class="t" style="left:238px;top:375px;letter-spacing:0.15px">P-333274</div>
<div class="t n" style="right:1042px;top:375px">931</div>
<div class="t n" style="left:410px;top:375px">52</div>
<div class="t n" style="left:442px;top:375px">52</div>
<div class="t" style="left:497px;top:375px">D</div>
<div class="t" style="left:670px;top:375px">A Dialog</div>
<div class="t n" style="right:638px;top:375px">0</div>
<div class="t n" style="left:812px;top:375px">01.02.2012</div>
<div class="t n" style="right:414px;top:375px">0</div>
<div class="t" style="left:1040px;top:375px">Abbie</div>
<div class="t" style="left:1124px;top:375px">Rapier</div>
<div class="t" style="left:1262px;top:375px;width:124px;overflow:hidden;padding-left:4px;letter-spacing:-0.1px">Abbie.Rapier@example.com</div>
<div class="t" style="left:102px;top:394px;letter-spacing:0.45px">PR1/500/0076657446</div>
<div class="t" style="left:238px;top:394px;letter-spacing:-0.7px">ARAPIER</div>
<div class="t n" style="right:1042px;top:394px">967</div>
<div class="t n" style="left:410px;top:394px">52</div>
<div class="t n" style="left:442px;top:394px">52</div>
<div class="t" style="left:497px;top:394px">M</div>
<div class="t" style="left:670px;top:394px">A Dialog</div>
<div class="t n" style="right:638px;top:394px">0</div>
<div class="t n" style="left:812px;top:394px">27.12.2011</div>
<div class="t n" style="right:414px;top:394px">0</div>
<div class="t" style="left:1040px;top:394px">Abbie</div>
<div class="t" style="left:1124px;top:394px">Rapier</div>
<div class="t" style="left:1262px;top:394px;width:124px;overflow:hidden;padding-left:4px;letter-spacing:-0.1px">Abbie.Rapier@example.com</div>
<div class="t n" style="right:1347px;top:413px">7</div>
<div class="t" style="left:102px;top:413px;letter-spacing:0.38px">HR1/100/0076657446</div>
<div class="t" style="left:238px;top:413px;letter-spacing:-0.7px">DEMPSTERA</div>
<div class="t n" style="right:1042px;top:413px">130</div>
<div class="t n" style="left:410px;top:413px">52</div>
<div class="t n" style="left:442px;top:413px">52</div>
<div class="t" style="left:497px;top:413px">D</div>
<div class="t" style="left:670px;top:413px">A Dialog</div>
<div class="t n" style="right:638px;top:413px">0</div>
<div class="t n" style="left:812px;top:413px">12.04.2014</div>
<div class="t n" style="right:414px;top:413px">0</div>
<div class="t" style="left:1040px;top:413px">Abdalla</div>
<div class="t" style="left:1124px;top:413px">Dempster</div>
<div class="t" style="left:1262px;top:413px;width:124px;overflow:hidden;padding-left:4px;letter-spacing:-0.1px">Abdalla.Dempster@example.com</div>
<div class="t" style="left:102px;top:432px;letter-spacing:0.34px">KMP/200/0076657446</div>
<div class="t" style="left:238px;top:432px;letter-spacing:0.15px">L-948083</div>
<div class="t n" style="right:1042px;top:432px">652</div>
<div class="t n" style="left:410px;top:432px">52</div>
<div class="t n" style="left:442px;top:432px">52</div>
<div class="t" style="left:497px;top:432px">M</div>
<div class="t" style="left:670px;top:432px">A Dialog</div>
<div class="t n" style="right:638px;top:432px">0</div>
<div class="t n" style="left:812px;top:432px">06.11.2012</div>
<div class="t n" style="right:414px;top:432px">0</div>
<div class="t" style="left:1040px;top:432px">Abdalla</div>
<div class="t" style="left:1124px;top:432px">Dempster</div>
<div class="t" style="left:1262px;top:432px;width:124px;overflow:hidden;padding-left:4px;letter-spacing:-0.1px">Abdalla.Dempster@example.com</div>
<div class="t" style="left:102px;top:451px;letter-spacing:0.34px">KMP/200/0076657446</div>
<div class="t" style="left:238px;top:451px;letter-spacing:0.15px">P-365513</div>
<div class="t n" style="right:1042px;top:451px">53</div>
<div class="t n" style="left:410px;top:451px">52</div>
<div class="t n" style="left:442px;top:451px">52</div>
<div class="t" style="left:497px;top:451px">D</div>
<div class="t" style="left:670px;top:451px">A Dialog</div>
<div class="t n" style="right:638px;top:451px">0</div>
<div class="t n" style="left:812px;top:451px">28.06.2014</div>
<div class="t n" style="right:414px;top:451px">0</div>
<div class="t" style="left:1040px;top:451px">Abdalla</div>
<div class="t" style="left:1124px;top:451px">Dempster</div>
<div class="t" style="left:1262px;top:451px;width:124px;overflow:hidden;padding-left:4px;letter-spacing:-0.1px">Abdalla.Dempster@example.com</div>
<div class="t" style="left:102px;top:470px;letter-spacing:0.45px">PR1/500/0076657446</div>
<div class="t" style="left:238px;top:470px;letter-spacing:-0.7px">ADEMPSTER</div>
<div class="t n" style="right:1042px;top:470px">71</div>
<div class="t n" style="left:410px;top:470px">52</div>
<div class="t n" style="left:442px;top:470px">52</div>
<div class="t" style="left:497px;top:470px">D</div>
<div class="t" style="left:670px;top:470px">A Dialog</div>
<div class="t n" style="right:638px;top:470px">0</div>
<div class="t n" style="left:812px;top:470px">10.06.2014</div>
<div class="t n" style="right:414px;top:470px">0</div>
<div class="t" style="left:1040px;top:470px">Abdalla</div>
<div class="t" style="left:1124px;top:470px">Dempster</div>
<div class="t" style="left:1262px;top:470px;width:124px;overflow:hidden;padding-left:4px;letter-spacing:-0.1px">Abdalla.Dempster@example.com</div>
<div class="t n" style="right:1347px;top:489px">8</div>
<div class="t" style="left:102px;top:489px;letter-spacing:0.34px">KMP/200/0076657446</div>
<div class="t" style="left:238px;top:489px;letter-spacing:0.15px">P-137480</div>
<div class="t n" style="right:1042px;top:489px">104</div>
<div class="t n" style="left:410px;top:489px">52</div>
<div class="t n" style="left:442px;top:489px">52</div>
<div class="t" style="left:497px;top:489px">D</div>
<div class="t" style="left:670px;top:489px">A Dialog</div>
<div class="t n" style="right:638px;top:489px">0</div>
<div class="t n" style="left:812px;top:489px">08.05.2014</div>
<div class="t n" style="right:414px;top:489px">0</div>
<div class="t" style="left:1040px;top:489px">Abdelilah</div>
<div class="t" style="left:1124px;top:489px">Bowser</div>
<div class="t" style="left:1262px;top:489px;width:124px;overflow:hidden;padding-left:4px;letter-spacing:-0.1px">Abdelilah.Bowser@example.com</div>
<div class="t" style="left:102px;top:508px;letter-spacing:0.45px">PR1/500/0076657446</div>
<div class="t" style="left:238px;top:508px;letter-spacing:-0.7px">ABOWSER</div>
<div class="t n" style="right:1042px;top:508px">361</div>
<div class="t n" style="left:410px;top:508px">52</div>
<div class="t n" style="left:442px;top:508px">53</div>
<div class="t" style="left:497px;top:508px">M</div>
<div class="t" style="left:670px;top:508px">A Dialog</div>
<div class="t n" style="right:638px;top:508px">0</div>
<div class="t n" style="left:812px;top:508px">24.08.2013</div>
<div class="t n" style="right:414px;top:508px">0</div>
<div class="t" style="left:1040px;top:508px">Abdelilah</div>
<div class="t" style="left:1124px;top:508px">Bowser</div>
<div class="t" style="left:1262px;top:508px;width:124px;overflow:hidden;padding-left:4px;letter-spacing:-0.1px">Abdelilah.Bowser@example.com</div>
<div class="t n" style="right:1347px;top:527px">9</div>
<div class="t" style="left:102px;top:527px;letter-spacing:0.45px">PR1/500/0076657446</div>
<div class="t" style="left:238px;top:527px;letter-spacing:-0.7px">ABRAZELL</div>
<div class="t n" style="right:1042px;top:527px">212</div>
<div class="t n" style="left:410px;top:527px">52</div>
<div class="t n" style="left:442px;top:527px">52</div>
<div class="t" style="left:497px;top:527px">M</div>
<div class="t" style="left:670px;top:527px">A Dialog</div>
<div class="t n" style="right:638px;top:527px">0</div>
<div class="t n" style="left:812px;top:527px">20.01.2014</div>
<div class="t n" style="right:414px;top:527px">0</div>
<div class="t" style="left:1040px;top:527px">Abdulkader</div>
<div class="t" style="left:1124px;top:527px">Brazell</div>
<div class="t" style="left:1262px;top:527px;width:124px;overflow:hidden;padding-left:4px;letter-spacing:-0.1px">Abdulkader.Brazell@example.com</div>
<div class="t n" style="right:1347px;top:546px">10</div>
<div class="t" style="left:102px;top:546px;letter-spacing:0.45px">PR1/500/0076657446</div>
<div class="t" style="left:238px;top:546px;letter-spacing:-0.7px">ABURKS</div>
<div class="t n" style="right:1042px;top:546px">739</div>
<div class="t n" style="left:410px;top:546px">52</div>
<div class="t n" style="left:442px;top:546px">52</div>
<div class="t" style="left:497px;top:546px">D</div>
<div class="t" style="left:670px;top:546px">A Dialog</div>
<div class="t n" style="right:638px;top:546px">0</div>
<div class="t n" style="left:812px;top:546px">11.08.2012</div>
<div class="t n" style="right:414px;top:546px">0</div>
<div class="t" style="left:1040px;top:546px">Abdulkadir</div>
<div class="t" style="left:1124px;top:546px">Burks</div>
<div class="t" style="left:1262px;top:546px;width:124px;overflow:hidden;padding-left:4px;letter-spacing:-0.1px">Abdulkadir.Burks@example.com</div>
<div class="t n" style="right:1347px;top:565px">11</div>
<div class="t" style="left:102px;top:565px;letter-spacing:0.38px">HR1/100/0076657446</div>
<div class="t" style="left:238px;top:565px;letter-spacing:-0.7px">HIRTHA</div>
<div class="t n" style="right:1042px;top:565px">279</div>
<div class="t n" style="left:410px;top:565px">52</div>
<div class="t n" style="left:442px;top:565px">52</div>
<div class="t" style="left:497px;top:565px">D</div>
<div class="t" style="left:670px;top:565px">A Dialog</div>
<div class="t n" style="right:638px;top:565px">0</div>
<div class="t n" style="left:812px;top:565px">14.11.2013</div>
<div class="t n" style="right:414px;top:565px">0</div>
<div class="t" style="left:1040px;top:565px">Abdurrahman</div>
<div class="t" style="left:1124px;top:565px">Hirth</div>
<div class="t" style="left:1262px;top:565px;width:124px;overflow:hidden;padding-left:4px;letter-spacing:-0.1px">Abdurrahman.Hirth@example.com</div>
<div class="t" style="left:102px;top:584px;letter-spacing:0.34px">KMP/200/0076657446</div>
<div class="t" style="left:238px;top:584px;letter-spacing:0.15px">P-277096</div>
<div class="t n" style="right:1042px;top:584px">279</div>
<div class="t n" style="left:410px;top:584px">52</div>
<div class="t n" style="left:442px;top:584px">53</div>
<div class="t" style="left:497px;top:584px">M</div>
<div class="t" style="left:670px;top:584px">A Dialog</div>
<div class="t n" style="right:638px;top:584px">0</div>
<div class="t n" style="left:812px;top:584px">14.11.2013</div>
<div class="t n" style="right:414px;top:584px">0</div>
<div class="t" style="left:1040px;top:584px">Abdurrahman</div>
<div class="t" style="left:1124px;top:584px">Hirth</div>
<div class="t" style="left:1262px;top:584px;width:124px;overflow:hidden;padding-left:4px;letter-spacing:-0.1px">Abdurrahman.Hirth@example.com</div>
<div class="t" style="left:102px;top:603px;letter-spacing:0.45px">PR1/500/0076657446</div>
<div class="t" style="left:238px;top:603px;letter-spacing:-0.7px">AHIRTH</div>
<div class="t n" style="right:1042px;top:603px">11</div>
<div class="t n" style="left:410px;top:603px">52</div>
<div class="t n" style="left:442px;top:603px">53</div>
<div class="t" style="left:497px;top:603px">M</div>
<div class="t" style="left:670px;top:603px">A Dialog</div>
<div class="t n" style="right:638px;top:603px">0</div>
<div class="t n" style="left:812px;top:603px">09.08.2014</div>
<div class="t n" style="right:414px;top:603px">0</div>
<div class="t" style="left:1040px;top:603px">Abdurrahman</div>
<div class="t" style="left:1124px;top:603px">Hirth</div>
<div class="t" style="left:1262px;top:603px;width:124px;overflow:hidden;padding-left:4px;letter-spacing:-0.1px">Abdurrahman.Hirth@example.com</div>
<div class="t n" style="right:1347px;top:622px">12</div>
<div class="t" style="left:102px;top:622px;letter-spacing:0.38px">HR1/100/0076657446</div>
<div class="t" style="left:238px;top:622px;letter-spacing:-0.7px">BURKHALTERA</div>
<div class="t n" style="right:1042px;top:622px">73</div>
<div class="t n" style="left:410px;top:622px">52</div>
<div class="t n" style="left:442px;top:622px">54</div>
<div class="t" style="left:497px;top:622px">M</div>
<div class="t" style="left:670px;top:622px">A Dialog</div>
<div class="t n" style="right:638px;top:622px">0</div>
<div class="t n" style="left:812px;top:622px">08.06.2014</div>
<div class="t n" style="right:414px;top:622px">0</div>
<div class="t" style="left:1040px;top:622px">Abdülhamid</div>
<div class="t" style="left:1124px;top:622px">Burkhalter</div>
<div class="t" style="left:1262px;top:622px;width:124px;overflow:hidden;padding-left:4px;letter-spacing:-0.1px">Abdülhamid.Burkhalter@example.com</div>
<div class="t" style="left:102px;top:641px;letter-spacing:0.34px">KMP/200/0076657446</div>
<div class="t" style="left:238px;top:641px;letter-spacing:0.15px">T-514898</div>
<div class="t n" style="right:1042px;top:641px">79</div>
<div class="t n" style="left:410px;top:641px">52</div>
<div class="t n" style="left:442px;top:641px">53</div>
<div class="t" style="left:497px;top:641px">M</div>
<div class="t" style="left:670px;top:641px">A Dialog</div>
<div class="t n" style="right:638px;top:641px">0</div>
<div class="t n" style="left:812px;top:641px">02.06.2014</div>
<div class="t n" style="right:414px;top:641px">0</div>
<div class="t" style="left:1040px;top:641px">Abdülhamid</div>
<div class="t" style="left:1124px;top:641px">Burkhalter</div>
<div class="t" style="left:1262px;top:641px;width:124px;overflow:hidden;padding-left:4px;letter-spacing:-0.1px">Abdülhamid.Burkhalter@example.com</div>
<div class="t" style="left:102px;top:660px;letter-spacing:0.45px">PR1/500/0076657446</div>
<div class="t" style="left:238px;top:660px;letter-spacing:-0.7px">ABURKHALTER</div>
<div class="t n" style="right:1042px;top:660px">15</div>
<div class="t n" style="left:410px;top:660px">52</div>
<div class="t n" style="left:442px;top:660px">52</div>
<div class="t" style="left:497px;top:660px">D</div>
<div class="t" style="left:670px;top:660px">A Dialog</div>
<div class="t n" style="right:638px;top:660px">0</div>
<div class="t n" style="left:812px;top:660px">05.08.2014</div>
<div class="t n" style="right:414px;top:660px">0</div>
<div class="t" style="left:1040px;top:660px">Abdülhamid</div>
<div class="t" style="left:1124px;top:660px">Burkhalter</div>
<div class="t" style="left:1262px;top:660px;width:124px;overflow:hidden;padding-left:4px;letter-spacing:-0.1px">Abdülhamid.Burkhalter@example.com</div>
<div class="t n" style="right:1347px;top:679px">13</div>
<div class="t" style="left:102px;top:679px;letter-spacing:0.38px">HR1/100/0076657446</div>
<div class="t" style="left:238px;top:679px;letter-spacing:-0.7px">PELLEGRINA</div>
<div class="t n" style="right:1042px;top:679px">3</div>
<div class="t n" style="left:410px;top:679px">52</div>
<div class="t n" style="left:442px;top:679px">52</div>
<div class="t" style="left:497px;top:679px">D</div>
<div class="t" style="left:670px;top:679px">A Dialog</div>
<div class="t n" style="right:638px;top:679px">0</div>
<div class="t n" style="left:812px;top:679px">17.08.2014</div>
<div class="t n" style="right:414px;top:679px">0</div>
<div class="t" style="left:1040px;top:679px">Abelia</div>
<div class="t" style="left:1124px;top:679px">Pellegrin</div>
<div class="t" style="left:1262px;top:679px;width:124px;overflow:hidden;padding-left:4px;letter-spacing:-0.1px">Abelia.Pellegrin@example.com</div>
<div class="t" style="left:102px;top:698px;letter-spacing:0.34px">KMP/200/0076657446</div>
<div class="t" style="left:238px;top:698px;letter-spacing:0.15px">L-939257</div>
<div class="t n" style="right:1042px;top:698px">90</div>
<div class="t n" style="left:410px;top:698px">52</div>
<div class="t n" style="left:442px;top:698px">54</div>
<div class="t" style="left:497px;top:698px">M</div>
<div class="t" style="left:670px;top:698px">A Dialog</div>
<div class="t n" style="right:638px;top:698px">0</div>
<div class="t n" style="left:812px;top:698px">22.05.2014</div>
<div class="t n" style="right:414px;top:698px">0</div>
<div class="t" style="left:1040px;top:698px">Abelia</div>
<div class="t" style="left:1124px;top:698px">Pellegrin</div>
<div class="t" style="left:1262px;top:698px;width:124px;overflow:hidden;padding-left:4px;letter-spacing:-0.1px">Abelia.Pellegrin@example.com</div>
<div class="t" style="left:102px;top:717px;letter-spacing:0.45px">PR1/500/0076657446</div>
<div class="t" style="left:238px;top:717px;letter-spacing:-0.7px">APELLEGRIN</div>
<div class="t n" style="right:1042px;top:717px">9</div>
<div class="t n" style="left:410px;top:717px">52</div>
<div class="t n" style="left:442px;top:717px">52</div>
<div class="t" style="left:497px;top:717px">D</div>
<div class="t" style="left:670px;top:717px">A Dialog</div>
<div class="t n" style="right:638px;top:717px">0</div>
<div class="t n" style="left:812px;top:717px">11.08.2014</div>
<div class="t n" style="right:414px;top:717px">0</div>
<div class="t" style="left:1040px;top:717px">Abelia</div>
<div class="t" style="left:1124px;top:717px">Pellegrin</div>
<div class="t" style="left:1262px;top:717px;width:124px;overflow:hidden;padding-left:4px;letter-spacing:-0.1px">Abelia.Pellegrin@example.com</div>
<div class="t n" style="right:1347px;top:736px">14</div>
<div class="t" style="left:102px;top:736px;letter-spacing:0.34px">KMP/200/0076657446</div>
<div class="t" style="left:238px;top:736px;letter-spacing:0.15px">T-458073</div>
<div class="t n" style="right:1042px;top:736px">407</div>
<div class="t n" style="left:410px;top:736px">52</div>
<div class="t n" style="left:442px;top:736px">52</div>
<div class="t" style="left:497px;top:736px">D</div>
<div class="t" style="left:670px;top:736px">A Dialog</div>
<div class="t n" style="right:638px;top:736px">0</div>
<div class="t n" style="left:812px;top:736px">09.07.2013</div>
<div class="t n" style="right:414px;top:736px">0</div>
<div class="t" style="left:1040px;top:736px">Abelle</div>
<div class="t" style="left:1124px;top:736px">Vivanco</div>
<div class="t" style="left:1262px;top:736px;width:124px;overflow:hidden;padding-left:4px;letter-spacing:-0.1px">Abelle.Vivanco@example.com</div>
<div class="t" style="left:102px;top:755px;letter-spacing:0.34px">KMP/200/0076657446</div>
<div class="t" style="left:238px;top:755px;letter-spacing:0.15px">T-681061</div>
<div class="t n" style="right:1042px;top:755px">865</div>
<div class="t n" style="left:410px;top:755px">52</div>
<div class="t n" style="left:442px;top:755px">52</div>
<div class="t" style="left:497px;top:755px">D</div>
<div class="t" style="left:670px;top:755px">A Dialog</div>
<div class="t n" style="right:638px;top:755px">0</div>
<div class="t n" style="left:812px;top:755px">07.04.2012</div>
<div class="t n" style="right:414px;top:755px">0</div>
<div class="t" style="left:1040px;top:755px">Abelle</div>
<div class="t" style="left:1124px;top:755px">Vivanco</div>
<div class="t" style="left:1262px;top:755px;width:124px;overflow:hidden;padding-left:4px;letter-spacing:-0.1px">Abelle.Vivanco@example.com</div>
<div class="t" style="left:102px;top:774px;letter-spacing:0.45px">PR1/500/0076657446</div>
<div class="t" style="left:238px;top:774px;letter-spacing:-0.7px">AVIVANCO</div>
<div class="t n" style="right:1042px;top:774px">418</div>
<div class="t n" style="left:410px;top:774px">52</div>
<div class="t n" style="left:442px;top:774px">52</div>
<div class="t" style="left:497px;top:774px">D</div>
<div class="t" style="left:670px;top:774px">A Dialog</div>
<div class="t n" style="right:638px;top:774px">0</div>
<div class="t n" style="left:812px;top:774px">28.06.2013</div>
<div class="t n" style="right:414px;top:774px">0</div>
<div class="t" style="left:1040px;top:774px">Abelle</div>
<div class="t" style="left:1124px;top:774px">Vivanco</div>
<div class="t" style="left:1262px;top:774px;width:124px;overflow:hidden;padding-left:4px;letter-spacing:-0.1px">Abelle.Vivanco@example.com</div>
<div class="t n" style="right:1347px;top:793px">15</div>
<div class="t" style="left:102px;top:793px;letter-spacing:0.45px">PR1/500/0076657446</div>
<div class="t" style="left:238px;top:793px;letter-spacing:-0.7px">ACREWS</div>
<div class="t n" style="right:1042px;top:793px">988</div>
<div class="t n" style="left:410px;top:793px">52</div>
<div class="t n" style="left:442px;top:793px">52</div>
<div class="t" style="left:497px;top:793px">D</div>
<div class="t" style="left:670px;top:793px">A Dialog</div>
<div class="t n" style="right:638px;top:793px">0</div>
<div class="t n" style="left:812px;top:793px">06.12.2011</div>
<div class="t n" style="right:414px;top:793px">0</div>
<div class="t" style="left:1040px;top:793px">Abrar</div>
<div class="t" style="left:1124px;top:793px">Crews</div>
<div class="t" style="left:1262px;top:793px;width:124px;overflow:hidden;padding-left:4px;letter-spacing:-0.1px">Abrar.Crews@example.com</div>
<div class="t n" style="right:1347px;top:812px">16</div>
<div class="t" style="left:102px;top:812px;letter-spacing:0.45px">PR1/500/0076657446</div>
<div class="t" style="left:238px;top:812px;letter-spacing:-0.7px">ADICKERMAN</div>
<div class="t n" style="right:1042px;top:812px">890</div>
<div class="t n" style="left:410px;top:812px">52</div>
<div class="t n" style="left:442px;top:812px">52</div>
<div class="t" style="left:497px;top:812px">D</div>
<div class="t" style="left:670px;top:812px">A Dialog</div>
<div class="t n" style="right:638px;top:812px">0</div>
<div class="t n" style="left:812px;top:812px">13.03.2012</div>
<div class="t n" style="right:414px;top:812px">0</div>
<div class="t" style="left:1040px;top:812px">Abrar</div>
<div class="t" style="left:1124px;top:812px">Dickerman</div>
<div class="t" style="left:1262px;top:812px;width:124px;overflow:hidden;padding-left:4px;letter-spacing:-0.1px">Abrar.Dickerman@example.com</div>
<div class="t n" style="right:1347px;top:831px">17</div>
<div class="t" style="left:102px;top:831px;letter-spacing:0.45px">PR1/500/0076657446</div>
<div class="t" style="left:238px;top:831px;letter-spacing:-0.7px">AFOLEY</div>
<div class="t n" style="right:1042px;top:831px">932</div>
<div class="t n" style="left:410px;top:831px">52</div>
<div class="t n" style="left:442px;top:831px">52</div>
<div class="t" style="left:497px;top:831px">M</div>
<div class="t" style="left:670px;top:831px">A Dialog</div>
<div class="t n" style="right:638px;top:831px">0</div>
<div class="t n" style="left:812px;top:831px">31.01.2012</div>
<div class="t n" style="right:414px;top:831px">0</div>
<div class="t" style="left:1040px;top:831px">Aca</div>
<div class="t" style="left:1124px;top:831px">Foley</div>
<div class="t" style="left:1262px;top:831px;width:124px;overflow:hidden;padding-left:4px;letter-spacing:-0.1px">Aca.Foley@example.com</div>
<div class="t n" style="right:1347px;top:850px">18</div>
<div class="t" style="left:102px;top:850px;letter-spacing:0.38px">HR1/100/0076657446</div>
<div class="t" style="left:238px;top:850px;letter-spacing:-0.7px">VANWAGENENA</div>
<div class="t n" style="right:1042px;top:850px">148</div>
<div class="t n" style="left:410px;top:850px">52</div>
<div class="t n" style="left:442px;top:850px">52</div>
<div class="t" style="left:497px;top:850px">M</div>
<div class="t" style="left:670px;top:850px">A Dialog</div>
<div class="t n" style="right:638px;top:850px">0</div>
<div class="t n" style="left:812px;top:850px">25.03.2014</div>
<div class="t n" style="right:414px;top:850px">0</div>
<div class="t" style="left:1040px;top:850px">Achilina</div>
<div class="t" style="left:1124px;top:850px">Vanwagenen</div>
<div class="t" style="left:1262px;top:850px;width:124px;overflow:hidden;padding-left:4px;letter-spacing:-0.1px">Achilina.Vanwagenen@example.com</div>
<div class="a" style="left:25px;top:861px;width:1383px;height:22px;background:#f2f2f2"></div>
<svg class="a" style="left:1392px;top:189px" width="10" height="6" viewBox="0 0 10 6"><path d="M1.5 4.8L5.0 1.2L8.5 4.8" fill="none" stroke="#5c5c5c" stroke-width="2.1"/></svg>
<svg class="a" style="left:1392px;top:207px" width="10" height="6" viewBox="0 0 10 6"><path d="M1.5 1.2L5.0 4.8L8.5 1.2" fill="none" stroke="#5c5c5c" stroke-width="2.1"/></svg>
<div class="a" style="left:1392px;top:220px;width:11px;height:5px;background:#b9c3cc"></div>
<svg class="a" style="left:1392px;top:831px" width="10" height="6" viewBox="0 0 10 6"><path d="M1.5 4.8L5.0 1.2L8.5 4.8" fill="none" stroke="#5c5c5c" stroke-width="2.1"/></svg>
<svg class="a" style="left:1392px;top:849px" width="10" height="6" viewBox="0 0 10 6"><path d="M1.5 1.2L5.0 4.8L8.5 1.2" fill="none" stroke="#5c5c5c" stroke-width="2.1"/></svg>
<svg class="a" style="left:340px;top:867px" width="6" height="10" viewBox="0 0 6 10"><path d="M5 1L1 5.0L5 9" fill="none" stroke="#5c5c5c" stroke-width="1.8"/></svg>
<svg class="a" style="left:358px;top:867px" width="6" height="10" viewBox="0 0 6 10"><path d="M1 1L5 5.0L1 9" fill="none" stroke="#5c5c5c" stroke-width="1.8"/></svg>
<div class="a" style="left:373px;top:868px;width:471px;height:10px;background:#b5bfc9"></div>
<div class="a" style="left:606px;top:871px;width:1px;height:4px;background:#fff"></div>
<div class="a" style="left:608px;top:871px;width:1px;height:4px;background:#fff"></div>
<div class="a" style="left:610px;top:871px;width:1px;height:4px;background:#fff"></div>
<svg class="a" style="left:1354px;top:867px" width="6" height="10" viewBox="0 0 6 10"><path d="M5 1L1 5.0L5 9" fill="none" stroke="#5c5c5c" stroke-width="1.8"/></svg>
<svg class="a" style="left:1373px;top:867px" width="6" height="10" viewBox="0 0 6 10"><path d="M1 1L5 5.0L1 9" fill="none" stroke="#5c5c5c" stroke-width="1.8"/></svg>
<svg class="a" style="left:699px;top:889px" width="40" height="19" viewBox="0 0 40 19"><defs><linearGradient id="sg" x1="0" y1="0" x2="0" y2="1"><stop offset="0" stop-color="#8cd9f1"/><stop offset="1" stop-color="#9bb3de"/></linearGradient></defs><path d="M0 0H39L20 19H0Z" fill="url(#sg)"/><text x="1" y="15.6" font-family="Liberation Sans" font-weight="bold" font-size="17" fill="#fff" stroke="#fff" stroke-width="0.6" textLength="27.5" lengthAdjust="spacingAndGlyphs">SAP</text></svg>
<svg class="a" style="left:1126px;top:895px" width="10" height="8" viewBox="0 0 10 8"><path d="M1.2 0.8L4.2 3.8L1.2 6.8M5.4 0.8L8.4 3.8L5.4 6.8" fill="none" stroke="#454545" stroke-width="1.3"/></svg>
<div class="a" style="left:1141px;top:893px;width:2px;height:12px;background:#b4b4b4"></div>
<div class="t n" style="left:1148px;top:893px">I7D (1) 001</div>
<svg class="a" style="left:1218px;top:894px" width="10" height="6" viewBox="0 0 10 6"><path d="M1.5 1.2L5.0 4.8L8.5 1.2" fill="none" stroke="#404040" stroke-width="1.8"/></svg>
<div class="a" style="left:1234px;top:893px;width:2px;height:12px;background:#b4b4b4"></div>
<div class="t" style="left:1241px;top:893px">ilse0113</div>
<div class="a" style="left:1291px;top:893px;width:2px;height:12px;background:#b4b4b4"></div>
<div class="t" style="left:1298px;top:893px">INS</div>
<div class="a" style="left:1323px;top:893px;width:2px;height:12px;background:#b4b4b4"></div>
<div class="a" style="left:1349px;top:893px;width:2px;height:12px;background:#b4b4b4"></div>
<svg class="a" style="left:1360px;top:890px" width="18" height="16" viewBox="0 0 18 16"><path d="M1.5 1V7.8M16.5 7V14.6" stroke="#bcbcbc" stroke-width="1.1"/><path d="M3 4.6H16M1.8 10.6H15" stroke="#bcbcbc" stroke-width="1.1"/><path d="M6.2 2L2.8 4.6L6.2 7.2M11.8 8L15.2 10.6L11.8 13.2" fill="none" stroke="#bcbcbc" stroke-width="1.3"/></svg>
<div class="a" style="left:1388px;top:893px;width:2px;height:12px;background:#b4b4b4"></div>
<svg class="a" style="left:1394px;top:890px" width="18" height="17" viewBox="0 0 18 17"><path d="M9.2 7V5Q9.2 1.2 12.7 1.2Q16.2 1.2 16.2 5V6.4" fill="none" stroke="#444" stroke-width="1.7"/><rect x="1.8" y="8.4" width="10.6" height="7.4" rx="1" fill="#92b4da" stroke="#0f5a9a" stroke-width="1.3"/></svg>
<svg class="a" style="left:1419px;top:900px" width="16" height="16" viewBox="0 0 16 16"><path d="M2.5 14.5L15 2M7.5 14.5L15 7M12.5 14.5L15 12" stroke="#d6d6d6" stroke-width="1.5"/></svg>
</body></html>
